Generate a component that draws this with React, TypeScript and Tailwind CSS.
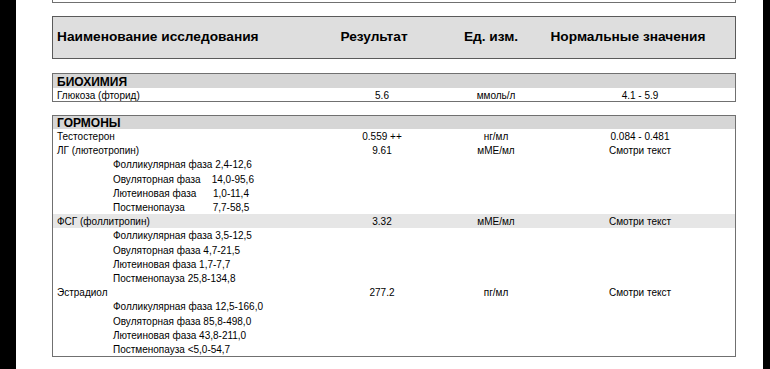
import React from "react";

const font = { fontFamily: '"Liberation Sans", Arial, sans-serif' };

type Row = {
  name: string;
  result?: string;
  unit?: string;
  norm?: string;
  sub?: boolean;
  shade?: boolean;
};

const hormones: Row[] = [
  { name: "Тестостерон", result: "0.559 ++", unit: "нг/мл", norm: "0.084 - 0.481" },
  { name: "ЛГ (лютеотропин)", result: "9.61", unit: "мМЕ/мл", norm: "Смотри текст" },
  { name: "Фолликулярная фаза 2,4-12,6", sub: true },
  { name: "Овуляторная фаза    14,0-95,6", sub: true },
  { name: "Лютеиновая фаза      1,0-11,4", sub: true },
  { name: "Постменопауза          7,7-58,5", sub: true },
  { name: "ФСГ (фоллитропин)", result: "3.32", unit: "мМЕ/мл", norm: "Смотри текст", shade: true },
  { name: "Фолликулярная фаза 3,5-12,5", sub: true },
  { name: "Овуляторная фаза 4,7-21,5", sub: true },
  { name: "Лютеиновая фаза 1,7-7,7", sub: true },
  { name: "Постменопауза 25,8-134,8", sub: true },
  { name: "Эстрадиол", result: "277.2", unit: "пг/мл", norm: "Смотри текст" },
  { name: "Фолликулярная фаза 12,5-166,0", sub: true },
  { name: "Овуляторная фаза 85,8-498,0", sub: true },
  { name: "Лютеиновая фаза 43,8-211,0", sub: true },
  { name: "Постменопауза <5,0-54,7", sub: true },
];

function DataRow({ r, h }: { r: Row; h: string }) {
  return (
    <div
      className={`grid grid-cols-[277px_104px_124px_164px_1fr] items-center pt-[2px] text-[10px] leading-none text-black ${h} ${
        r.shade ? "bg-[#e6e6e6]" : ""
      }`}
    >
      <div className={`whitespace-pre ${r.sub ? "pl-[60px]" : "pl-[4px]"}`}>{r.name}</div>
      <div className="text-center">{r.result ?? ""}</div>
      <div className="text-center">{r.unit ?? ""}</div>
      <div className="text-center">{r.norm ?? ""}</div>
      <div />
    </div>
  );
}

export default function App() {
  return (
    <div className="flex h-[369px] w-[770px] overflow-hidden bg-black" style={font}>
      <div className="w-[16px] shrink-0 bg-black" />
      <div className="flex w-[747px] shrink-0 flex-col bg-white pl-[36px]">
        <div className="h-[3px] w-[684px] border-x border-b border-[#707070]" />
        <div className="mt-[13px] flex h-[43px] w-[684px] items-center border border-[#5a5a5a] bg-[#dedede] text-[13.7px] font-bold text-black">
          <div className="grid w-full grid-cols-[269px_104px_130px_144px_1fr] items-center whitespace-nowrap">
            <div className="pl-[4px]">Наименование исследования</div>
            <div className="flex justify-center">Результат</div>
            <div className="flex justify-center">Ед. изм.</div>
            <div className="flex justify-center">Нормальные значения</div>
            <div />
          </div>
        </div>

        <div className="mt-[14px] w-[684px] border border-[#707070]">
          <div className="flex h-[14px] items-center bg-[#d6d6d6] pl-[4px] pt-[1px] text-[12px] font-bold leading-none text-black">
            БИОХИМИЯ
          </div>
          <DataRow r={{ name: "Глюкоза (фторид)", result: "5.6", unit: "ммоль/л", norm: "4.1 - 5.9" }} h="h-[13px]" />
        </div>

        <div className="mt-[13px] w-[684px] border border-[#707070]">
          <div className="flex h-[13px] items-center bg-[#d6d6d6] pl-[4px] pt-[1px] text-[12px] font-bold leading-none text-black">
            ГОРМОНЫ
          </div>
          {hormones.map((r, i) => (
            <DataRow key={i} r={r} h="h-[14.2px]" />
          ))}
        </div>
      </div>
      <div className="flex-1 bg-black" />
    </div>
  );
}
